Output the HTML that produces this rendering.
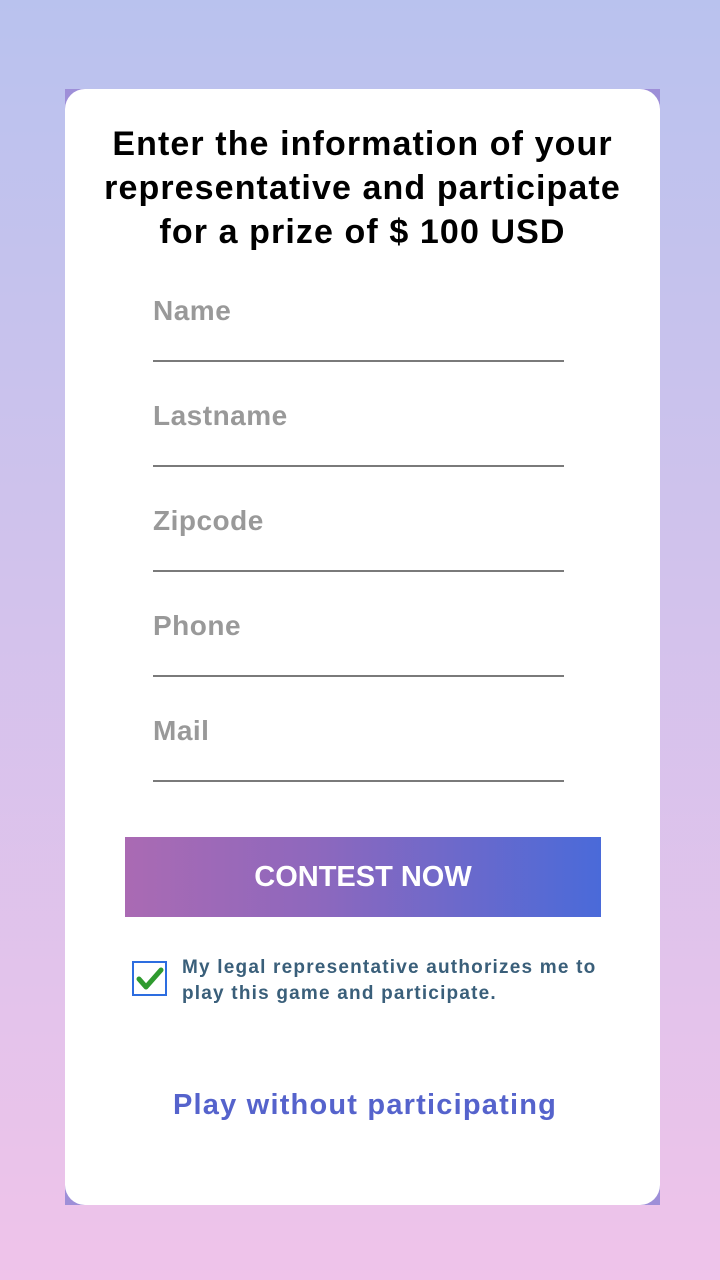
<!DOCTYPE html>
<html><head><style>
body{margin:0;width:720px;height:1280px;background:linear-gradient(#b9c2ee,#efc3ea);font-family:"Liberation Sans",sans-serif;position:relative;overflow:hidden}
.cornerbg{position:absolute;left:65px;top:89px;width:595px;height:1116px;background:#9e8fd8}
.card{position:absolute;left:65px;top:89px;width:595px;height:1116px;background:#fff;border-radius:20px}
h1{position:absolute;left:0;top:122px;width:725px;margin:0;text-align:center;font-size:34px;letter-spacing:1.1px;line-height:44px;font-weight:bold;color:#000}
.f{position:absolute;left:153px;width:411px;height:65px;border-bottom:2px solid #7a7a7a;font-size:28px;letter-spacing:0.5px;font-weight:bold;color:#999}
.btn{position:absolute;left:125px;top:837px;width:476px;height:80px;background:linear-gradient(90deg,#aa6ab3,#8e68bd 40%,#4a6ad9);color:#fff;font-size:29px;font-weight:bold;text-align:center;line-height:80px}
.cb{position:absolute;left:132px;top:961px;width:31px;height:31px;border:2px solid #2d6de0;background:#fff}
.lbl{position:absolute;left:182px;top:955px;font-size:19px;letter-spacing:1.2px;line-height:26px;font-weight:bold;color:#3a5f7a}
.play{position:absolute;left:0;top:1089px;width:730px;text-align:center;font-size:29px;letter-spacing:1.2px;font-weight:bold;color:#5563cc}
</style></head><body>
<div class="cornerbg"></div>
<div class="card"></div>
<h1>Enter the information of your<br>representative and participate<br>for a prize of $ 100 USD</h1>
<div class="f" style="top:295px">Name</div>
<div class="f" style="top:400px">Lastname</div>
<div class="f" style="top:505px">Zipcode</div>
<div class="f" style="top:610px">Phone</div>
<div class="f" style="top:715px">Mail</div>
<div class="btn">CONTEST NOW</div>
<div class="cb"><svg width="31" height="31" viewBox="0 0 31 31"><path d="M5 16 L12 24 L27 7" fill="none" stroke="#2e9a2e" stroke-width="5" stroke-linecap="round" stroke-linejoin="round"/></svg></div>
<div class="lbl">My legal representative authorizes me to<br>play this game and participate.</div>
<div class="play">Play without participating</div>
</body></html>
